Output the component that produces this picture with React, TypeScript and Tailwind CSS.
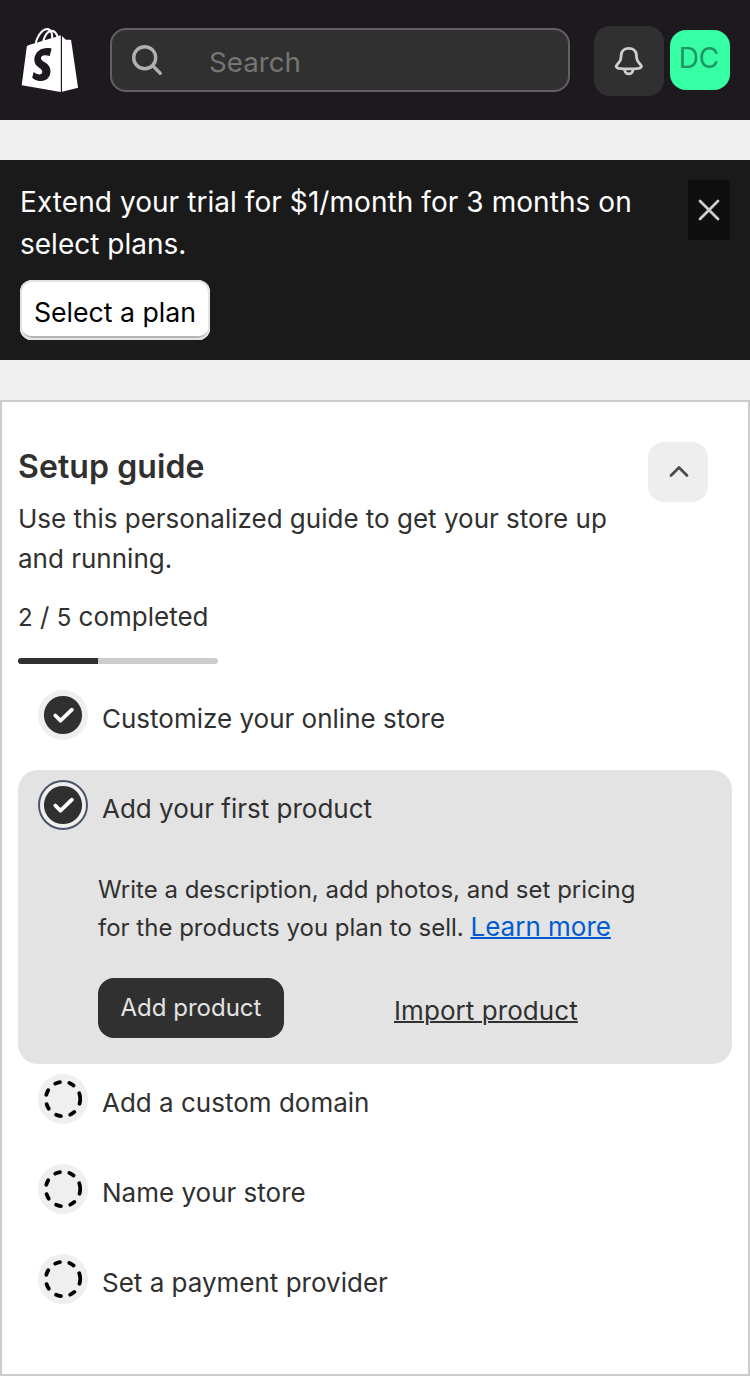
import { FaShopify } from "react-icons/fa";

const setupText = "text-[26px] leading-[40px]";

function SearchIcon() {
  return (
    <svg width="32" height="32" viewBox="0 0 32 32" fill="none" stroke="#b0b0b0" strokeWidth="3.4" strokeLinecap="round">
      <circle cx="13.7" cy="13.7" r="11" />
      <path d="M21.9 21.9 29.2 29.2" />
    </svg>
  );
}

function BellIcon() {
  return (
    <svg width="30" height="30" viewBox="0 0 30 30" fill="none" stroke="#cfcfcf" strokeWidth="2.8" strokeLinejoin="round">
      <path d="M7.2 8.9C7.5 4.8 10.6 2.300 14.800 2.300s7.300 2.500 7.600 6.600l.3 3.300c.2 2 1 3.500 2.400 4.900l1.300 1.300c1.900 1.900.8 3.600-1.500 3.900-6.600.7-13.600.7-20.200 0-2.300-.3-3.400-2-1.500-3.900l1.300-1.300c1.400-1.400 2.200-2.900 2.400-4.900z" />
      <path d="M10.700 23v.8c0 2.300 1.700 4 4.100 4s4.100-1.700 4.100-4V23" />
    </svg>
  );
}

function StepIcon({ done, focused }: { done?: boolean; focused?: boolean }) {
  return (
    <button
      className={
        focused
          ? "size-[50px] shrink-0 rounded-full border-2 border-[#4a5568] bg-[#efefef] flex items-center justify-center"
          : "size-[50px] shrink-0 rounded-full bg-[#efefef] flex items-center justify-center"
      }
    >
      <svg className="shrink-0" width="40" height="40" viewBox="0 0 40 40" fill="none" strokeLinecap="round">
        {done ? (
          <>
            <circle cx="20" cy="20" r="19.1" fill="#303030" />
            <path d="M12.300 20.500 17.500 25.700 28.900 14.700" stroke="#fff" strokeWidth="3.8" strokeLinejoin="round" />
          </>
        ) : (
          <circle cx="20" cy="20" r="17.2" stroke="#000" strokeWidth="3.8" strokeDasharray="4.9 9.6" />
        )}
      </svg>
    </button>
  );
}

function Step({ label, done, focused }: { label: string; done?: boolean; focused?: boolean }) {
  return (
    <div className="flex h-[90px] items-start gap-[14px] pt-[10px] pl-5">
      <StepIcon done={done} focused={focused} />
      <span className={`${setupText} mt-[9px]`}>{label}</span>
    </div>
  );
}

export default function App() {
  return (
    <div className="flex h-[1376px] w-[750px] flex-col overflow-hidden bg-[#f0f0f0] font-['Inter',sans-serif] text-[#303030]">
      <header className="flex h-[120px] shrink-0 items-start border-b border-[#1a161b] bg-[#1e191f]">
        <FaShopify className="mt-[27px] ml-[21px] h-[66px] w-[58px] shrink-0 text-white" />
        <div className="mt-7 ml-[31px] flex h-16 w-[460px] items-center rounded-[16px] border-2 border-[#616161] bg-[#303030] pl-[19px]">
          <SearchIcon />
          <span className="mt-1 ml-[46px] text-[27.7px] leading-8 text-[#757575]">Search</span>
        </div>
        <button className="mt-[26px] ml-6 flex size-[70px] items-center justify-center rounded-[16px] bg-[#303030]">
          <BellIcon />
        </button>
        <div className="mt-[30px] ml-1.5 flex size-[60px] justify-center rounded-[16px] bg-[#37ffa3] pt-3 pr-0.5 text-[28px] leading-8 text-[#1f9565]">
          DC
        </div>
      </header>

      <section className="mt-10 flex h-[200px] shrink-0 items-start justify-between bg-[#1a1a1a] px-5 pt-5">
        <div>
          <p className="mt-px w-[640px] text-[28px] leading-[42px] text-white">
            <span className="tracking-[0.065px]">Extend your trial for $1/month for 3 months on</span>
            <br />
            select plans.
          </p>
          <button className="mt-[15px] flex h-[60px] w-[190px] items-center justify-center rounded-[12px] bg-white pt-1 text-[26.67px] leading-8 whitespace-nowrap text-black shadow-[inset_0_-2px_0_#e3e3e3,inset_0_0_0_2px_#e3e3e3,inset_0_-4px_0_#b5b5b5]">
            Select a plan
          </button>
        </div>
        <button className="flex h-[60px] w-[42px] items-center justify-center bg-[#0f0f0f]">
          <svg width="24" height="24" viewBox="0 0 24 24" stroke="#cfcfcf" strokeWidth="2.8" strokeLinecap="round">
            <path d="M3 3 21 21M21 3 3 21" />
          </svg>
        </button>
      </section>

      <main className="mt-10 flex h-[976px] flex-col border-2 border-[#cccccc] bg-white px-4">
        <div className="flex justify-between pt-10 pr-6">
          <div>
            <h1 className="mt-[5px] text-[32px] leading-10 font-semibold tracking-[0.1px]">Setup guide</h1>
            <p className={`${setupText} mt-3`}>
              Use this personalized guide to get your store up
              <br />
              and running.
            </p>
          </div>
          <button className="flex size-[60px] items-center justify-center rounded-[16px] bg-[#eeeeee]">
            <svg width="24" height="24" viewBox="0 0 24 24" fill="none" stroke="#4a4a4a" strokeWidth="2.8" strokeLinecap="round" strokeLinejoin="round">
              <path d="M5 15.400 13 7.400 21 15.400" />
            </svg>
          </button>
        </div>
        <p className={`${setupText} mt-[18px]`}>
          <span className="text-[24px] leading-none">2</span> / <span className="text-[24px] leading-none">5</span> completed
        </p>
        <div className="mt-[21px] h-1.5 w-[200px] overflow-hidden rounded-full bg-[#cccccc]">
          <div className="h-full w-[40%] bg-[#303030]" />
        </div>
        <div className="mt-4">
          <Step label="Customize your online store" done />
          <div className="h-[294px] rounded-[20px] bg-[#e3e3e3]">
            <Step label="Add your first product" done focused />
            <div className="pt-[11px] pl-20">
              <p className="text-[24px] leading-[38px]">
                Write a description, add photos, and set pricing
                <br />
                for the products you plan to sell.{" "}
                <a className="text-[26px] leading-none text-[#005bd3] underline decoration-2">Learn more</a>
              </p>
              <div className="mt-[31px] flex items-start">
                <button className="flex h-[60px] w-[186px] items-center justify-center rounded-[16px] bg-[#303030] text-[24px] text-[#e3e3e3]">
                  Add product
                </button>
                <a className={`${setupText} mt-[13px] ml-[110px] tracking-[0.07px] underline decoration-2`}>Import product</a>
              </div>
            </div>
          </div>
          <Step label="Add a custom domain" />
          <Step label="Name your store" />
          <Step label="Set a payment provider" />
        </div>
      </main>
    </div>
  );
}
